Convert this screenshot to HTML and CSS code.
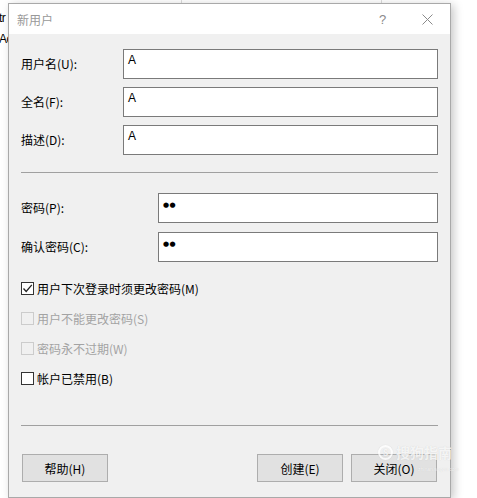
FILE: index.html
```html
<!DOCTYPE html>
<html lang="zh-CN">
<head>
<meta charset="utf-8">
<title>新用户</title>
<link rel="stylesheet" href="styles.css">
</head>
<body>
<div class="desk">
  <div class="desk-text">tr</div>
  <div class="desk-text">Ac</div>
</div>
<div class="dialog">
  <div class="titlebar">
    <span class="title">新用户</span>
    <span class="tb-btn tb-help">?</span>
    <span class="tb-btn tb-close">
      <svg width="11" height="11" viewBox="0 0 11 11"><path d="M0.5 0.5 L10.5 10.5 M10.5 0.5 L0.5 10.5" stroke="#8a8a8a" stroke-width="1" fill="none"/></svg>
    </span>
  </div>
  <div class="body">
    <div class="fields">
      <div class="row"><span class="label l1">用户名(U):</span><div class="edit">A</div></div>
      <div class="row"><span class="label l1">全名(F):</span><div class="edit">A</div></div>
      <div class="row"><span class="label l1">描述(D):</span><div class="edit">A</div></div>
    </div>
    <div class="sep sep1"></div>
    <div class="fields pw">
      <div class="row"><span class="label l2">密码(P):</span><div class="edit dots">●●</div></div>
      <div class="row"><span class="label l2">确认密码(C):</span><div class="edit dots">●●</div></div>
    </div>
    <div class="checks">
      <div class="check">
        <span class="box"><svg width="11" height="11" viewBox="0 0 11 11"><path d="M1.5 5.5 L4.2 8.5 L9.8 1.8" stroke="#222" stroke-width="1.3" fill="none"/></svg></span>
        <span>用户下次登录时须更改密码(M)</span>
      </div>
      <div class="check disabled"><span class="box"></span><span>用户不能更改密码(S)</span></div>
      <div class="check disabled"><span class="box"></span><span>密码永不过期(W)</span></div>
      <div class="check"><span class="box"></span><span>帐户已禁用(B)</span></div>
    </div>
    <div class="sep sep2"></div>
    <div class="buttons">
      <div class="btn help">帮助(H)</div>
      <div class="spacer"></div>
      <div class="btn">创建(E)</div>
      <div class="btn close">关闭(O)</div>
    </div>
  </div>
  <div class="watermark">
    <div class="wm-top">
      <span class="wm-logo">S</span>
      <span class="wm-text">搜狗指南</span>
    </div>
    <span class="wm-url">zhinan.sogou.com</span>
  </div>
</div>
</body>
</html>
```
FILE: styles.css
```css
html, body {
  margin: 0;
  padding: 0;
}
body {
  width: 477px;
  height: 498px;
  position: relative;
  overflow: hidden;
  background: #ffffff;
  font-family: "Noto Sans CJK SC", "Microsoft YaHei", sans-serif;
  font-size: 12px;
  color: #000;
}
.desk {
  width: 477px;
  height: 498px;
  padding-top: 8px;
  box-sizing: border-box;
  background-image: linear-gradient(#dcdcdc, #dcdcdc), linear-gradient(#dcdcdc, #dcdcdc);
  background-size: 1px 100%, 1px 100%;
  background-position: 181px 0, 381px 0;
  background-repeat: no-repeat;
}
.desk-text {
  font-family: "Liberation Sans", Arial, sans-serif;
  font-size: 12px;
  line-height: 21px;
  margin-left: -1px;
  letter-spacing: -0.5px;
}
.dialog {
  position: absolute;
  left: 8px;
  top: 3px;
  width: 441px;
  height: 493px;
  border: 1px solid #a9a9a9;
  background: #f0f0f0;
  box-shadow: 3px 2px 9px rgba(0, 0, 0, 0.22);
}
.titlebar {
  height: 30px;
  background: #ffffff;
  display: flex;
  align-items: center;
}
.title {
  padding-left: 8px;
  color: #999999;
  font-size: 12px;
  flex: 1;
}
.tb-btn {
  width: 45px;
  height: 30px;
  display: flex;
  align-items: center;
  justify-content: center;
  color: #8a8a8a;
}
.tb-help {
  font-family: "Liberation Sans", Arial, sans-serif;
  font-size: 13px;
}
.body {
  padding: 0 12px;
}
.fields {
  display: flex;
  flex-direction: column;
  gap: 8px;
  margin-top: 15px;
}
.fields.pw {
  gap: 9px;
  margin-top: 20px;
}
.row {
  display: flex;
  align-items: center;
  height: 30px;
}
.label {
  flex: none;
  line-height: 16px;
}
.l1 { width: 102px; }
.l2 { width: 137px; }
.edit {
  flex: 1;
  height: 30px;
  box-sizing: border-box;
  border: 1px solid #7a7a7a;
  background: #ffffff;
  padding: 3px 4px;
  font-family: "Liberation Sans", Arial, sans-serif;
  font-size: 12px;
  line-height: 15px;
}
.edit.dots {
  font-family: "DejaVu Sans", sans-serif;
  font-size: 7px;
  line-height: 15px;
  padding: 4px 4px;
  letter-spacing: 0.5px;
}
.sep {
  height: 1px;
  background: #a0a0a0;
}
.sep1 { margin-top: 17px; }
.sep2 { margin-top: 32px; }
.checks {
  margin-top: 11px;
  display: flex;
  flex-direction: column;
}
.check {
  height: 30px;
  display: flex;
  align-items: center;
  gap: 3px;
}
.box {
  width: 11px;
  height: 11px;
  border: 1px solid #333333;
  background: #ffffff;
  display: flex;
  align-items: center;
  justify-content: center;
  flex: none;
}
.check.disabled {
  color: #a3a3a3;
}
.check.disabled .box {
  border-color: #cccccc;
  background: #f0f0f0;
}
.buttons {
  margin-top: 28px;
  display: flex;
  gap: 8px;
  padding: 0 1px;
}
.spacer { flex: 1; }
.btn {
  width: 86px;
  height: 28px;
  box-sizing: border-box;
  border: 1px solid #adadad;
  background: #e1e1e1;
  display: flex;
  align-items: center;
  justify-content: center;
}
.watermark {
  position: absolute;
  left: 369px;
  top: 441px;
  display: flex;
  flex-direction: column;
  color: rgba(255, 255, 255, 0.8);
  text-shadow: 0 0 1px rgba(0, 0, 0, 0.15);
  pointer-events: none;
}
.wm-top {
  display: flex;
  align-items: center;
  gap: 3px;
  height: 14px;
}
.wm-logo {
  width: 11px;
  height: 11px;
  border: 2px solid rgba(255, 255, 255, 0.8);
  border-radius: 50%;
  font-size: 9px;
  line-height: 11px;
  text-align: center;
  font-weight: bold;
  box-shadow: 0 0 1px rgba(0, 0, 0, 0.15);
}
.wm-text {
  font-size: 14px;
  line-height: 14px;
  font-weight: bold;
}
.wm-url {
  margin-left: 40px;
  margin-top: 6px;
  font-family: "Liberation Sans", Arial, sans-serif;
  font-size: 5px;
  line-height: 8px;
  white-space: nowrap;
}
```
